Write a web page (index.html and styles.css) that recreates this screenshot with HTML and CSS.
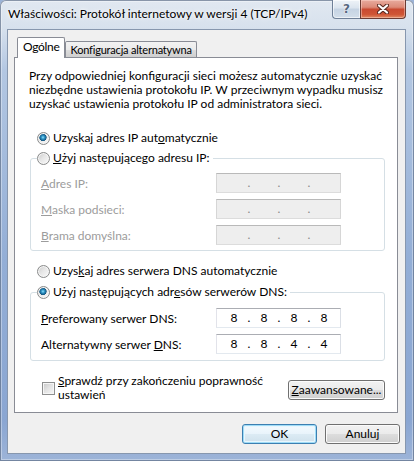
FILE: index.html
```html
<!DOCTYPE html>
<html lang="pl">
<head>
<meta charset="utf-8">
<title>Właściwości: Protokół internetowy w wersji 4 (TCP/IPv4)</title>
<link rel="stylesheet" href="styles.css">
</head>
<body>
<div class="window">
  <div class="titlebar">
    <div class="title">Właściwości: Protokół internetowy w wersji 4 (TCP/IPv4)</div>
    <div class="caption">
      <div class="cbtn help"><span>?</span></div>
      <div class="cbtn close">
        <svg width="12" height="10" viewBox="0 0 12 10">
          <path class="x-outline" d="M2 1.5 L10 8.5 M10 1.5 L2 8.5"/>
          <path class="x-fill" d="M2 1.5 L10 8.5 M10 1.5 L2 8.5"/>
        </svg>
      </div>
    </div>
  </div>
  <div class="client">
    <div class="tabs">
      <div class="tab active">Ogólne</div>
      <div class="tab">Konfiguracja alternatywna</div>
    </div>
    <div class="panel">
      <p class="desc">Przy odpowiedniej konfiguracji sieci możesz automatycznie uzyskać<br>niezbędne ustawienia protokołu IP. W przeciwnym wypadku musisz<br>uzyskać ustawienia protokołu IP od administratora sieci.</p>

      <div class="option first"><span class="radio checked"></span><span>Uzyskaj adres IP aut<u>o</u>matycznie</span></div>

      <fieldset class="group group-ip">
        <legend><span class="legend-option"><span class="radio"></span><span><u>U</u>żyj następującego adresu IP:</span></span></legend>
        <div class="field disabled"><span class="label"><u>A</u>dres IP:</span><span class="ipbox off"><span class="oct"></span><span class="dot">.</span><span class="oct"></span><span class="dot">.</span><span class="oct"></span><span class="dot">.</span><span class="oct"></span></span></div>
        <div class="field disabled"><span class="label"><u>M</u>aska podsieci:</span><span class="ipbox off"><span class="oct"></span><span class="dot">.</span><span class="oct"></span><span class="dot">.</span><span class="oct"></span><span class="dot">.</span><span class="oct"></span></span></div>
        <div class="field disabled"><span class="label"><u>B</u>rama domyślna:</span><span class="ipbox off"><span class="oct"></span><span class="dot">.</span><span class="oct"></span><span class="dot">.</span><span class="oct"></span><span class="dot">.</span><span class="oct"></span></span></div>
      </fieldset>

      <div class="option second"><span class="radio"></span><span>Uzys<u>k</u>aj adres serwera DNS automatycznie</span></div>

      <fieldset class="group group-dns">
        <legend><span class="legend-option"><span class="radio checked"></span><span>Użyj następujących adr<u>e</u>sów serwerów DNS:</span></span></legend>
        <div class="field"><span class="label"><u>P</u>referowany serwer DNS:</span><span class="ipbox"><span class="oct">8</span><span class="dot">.</span><span class="oct">8</span><span class="dot">.</span><span class="oct">8</span><span class="dot">.</span><span class="oct">8</span></span></div>
        <div class="field"><span class="label">Alternatywny serwer <u>D</u>NS:</span><span class="ipbox"><span class="oct">8</span><span class="dot">.</span><span class="oct">8</span><span class="dot">.</span><span class="oct">4</span><span class="dot">.</span><span class="oct">4</span></span></div>
      </fieldset>

      <div class="bottom-row">
        <div class="check"><span class="checkbox"></span><span class="check-text"><u>S</u>prawdź przy zakończeniu poprawność<br>ustawień</span></div>
        <div class="btn adv"><span><u>Z</u>aawansowane...</span></div>
      </div>
    </div>
    <div class="footer">
      <div class="btn default">OK</div>
      <div class="btn">Anuluj</div>
    </div>
  </div>
</div>
</body>
</html>
```

FILE: styles.css
```css
* { box-sizing: border-box; }
html, body { margin: 0; padding: 0; }
body {
  width: 414px;
  height: 461px;
  overflow: hidden;
  background: #9bb3d8;
  font-family: Lato, "Open Sans", sans-serif;
  font-size: 12px;
  color: #000;
}
u { text-decoration: underline; text-underline-offset: 1px; }

.window {
  width: 414px;
  height: 461px;
  display: flex;
  flex-direction: column;
  padding: 0 8px 7px 7px;
  border-radius: 6px 6px 0 0;
  background:
    linear-gradient(180deg, #e1e8f1 0, #d7e1ed 28px, #b3c7e2 70px, #93aed6 260px, #8aa6d2 420px, #9db4d8 461px);
  box-shadow: inset 0 0 0 1px rgba(55, 75, 105, .55), inset 0 0 0 2px rgba(255, 255, 255, .35);
}

.titlebar {
  flex: none;
  height: 29px;
  display: flex;
  align-items: flex-start;
}
.title {
  flex: 1;
  padding: 7px 0 0 1px;
  line-height: 14px;
  white-space: nowrap;
  text-shadow: 0 0 6px #fff, 0 0 3px #fff;
}
.caption { display: flex; }
.cbtn {
  height: 19px;
  display: flex;
  align-items: center;
  justify-content: center;
}
.help {
  width: 28px;
  border: 1px solid #6f8098;
  border-top: none;
  border-right: none;
  border-radius: 0 0 0 4px;
  background: linear-gradient(180deg, #eef3f8 0, #dbe4ee 45%, #c5d3e3 50%, #d3deea 100%);
  box-shadow: inset 0 0 0 1px rgba(255,255,255,.6);
}
.help span {
  font-family: "DejaVu Sans", sans-serif;
  font-size: 12px;
  font-weight: bold;
  color: #56677f;
  line-height: 12px;
  text-shadow: 0 0 2px #fff, 0 0 1px #fff;
}
.close {
  width: 46px;
  border: 1px solid #6b3b33;
  border-top: none;
  border-radius: 0 0 4px 0;
  background: linear-gradient(180deg, #e8ab9e 0, #dc8a78 40%, #c94a31 52%, #cf5535 80%, #e08a62 100%);
  box-shadow: inset 0 0 0 1px rgba(255,220,210,.45);
}
.x-outline { stroke: #5b2a22; stroke-width: 4.2; stroke-linecap: round; fill: none; }
.x-fill { stroke: #fff; stroke-width: 2.2; stroke-linecap: round; fill: none; }

.client {
  flex: 1;
  display: flex;
  flex-direction: column;
  background: #f0f0f0;
  border: 1px solid #8797ae;
  padding: 7px 7px 0 6px;
}

.tabs {
  flex: none;
  height: 20px;
  display: flex;
  align-items: flex-end;
  margin-left: 3px;
}
.tab {
  height: 16px;
  padding: 0 4px;
  line-height: 15px;
  font-size: 11px;
  letter-spacing: -0.2px;
  border: 1px solid #898c95;
  border-bottom: none;
  border-radius: 2px 2px 0 0;
  background: linear-gradient(180deg, #f2f2f2 0, #ebebeb 50%, #dddddd 51%, #cfcfcf 100%);
  white-space: nowrap;
}
.tab.active {
  position: relative;
  z-index: 1;
  height: 21px;
  margin-bottom: -1px;
  padding: 0 5px;
  line-height: 18px;
  font-size: 12px;
  letter-spacing: -0.3px;
  background: #fff;
}

.panel {
  flex: none;
  height: 356px;
  display: flex;
  flex-direction: column;
  background: #fff;
  border: 1px solid #898c95;
  padding: 11px 0 0 14px;
}
.desc {
  margin: 0;
  line-height: 14px;
  white-space: nowrap;
}

.option, .legend-option {
  display: flex;
  align-items: center;
  gap: 3px;
  height: 14px;
  line-height: 14px;
  white-space: nowrap;
}
.option { margin-left: 8px; }
.option.first { margin-top: 20px; }
.option.second { margin-top: 13px; }

.radio {
  flex: none;
  width: 13px;
  height: 13px;
  border-radius: 50%;
  border: 1px solid #8a8b8b;
  background: linear-gradient(135deg, #c9c9c9 0, #e6e6e6 45%, #fbfbfb 100%);
  box-shadow: inset 0 0 0 1px #f6f6f6;
}
.radio.checked {
  background:
    radial-gradient(circle at 45% 40%, #8ee0f8 0, #2f95c8 1.6px, #11557f 3.4px, rgba(17,85,127,0) 3.9px),
    linear-gradient(135deg, #c9c9c9 0, #e6e6e6 45%, #fbfbfb 100%);
}

.group {
  margin: 0 12px 0 1px;
  padding: 8px 0 5px 6px;
  border: 1px solid #d5dfe5;
  border-radius: 3px;
  min-width: 0;
}
.group-ip { margin-top: 6px; }
.group-dns { margin-top: 7px; padding-top: 9px; padding-bottom: 6px; }
.group legend {
  padding: 0 3px 0 0;
  margin: 0;
}

.field {
  display: flex;
  align-items: center;
  height: 20px;
  padding-left: 4px;
}
.field + .field { margin-top: 6px; }
.label { width: 175px; flex: none; white-space: nowrap; }
.field.disabled .label { color: #9c9c9c; }

.ipbox {
  flex: none;
  width: 125px;
  height: 20px;
  display: flex;
  align-items: center;
  padding-left: 4px;
  border: 1px solid;
  border-color: #abadb3 #dbdfe6 #e3e9ef #e2e3ea;
  background: #fff;
  line-height: 14px;
}
.ipbox.off {
  background: #eeeeee;
  border-color: #b9b9b9 #d6d6d6 #dcdcdc #d6d6d6;
}
.oct { width: 26px; text-align: center; }
.dot { width: 4px; text-align: center; }
.ipbox.off .dot { color: #8a8a8a; }

.bottom-row {
  display: flex;
  align-items: flex-start;
  margin-top: 13px;
}
.check {
  display: flex;
  align-items: center;
  gap: 3px;
  margin-left: 13px;
}
.checkbox {
  flex: none;
  width: 13px;
  height: 13px;
  border: 1px solid #8e8f8f;
  background: linear-gradient(135deg, #c8c8c8 0, #e4e4e4 50%, #f8f8f8 100%);
  box-shadow: inset 0 0 0 1px #f6f6f6;
}
.check-text { line-height: 14px; white-space: nowrap; }

.btn {
  width: 75px;
  height: 20px;
  display: flex;
  align-items: center;
  justify-content: center;
  border: 1px solid #707070;
  border-radius: 3px;
  background: linear-gradient(180deg, #f2f2f2 0, #ebebeb 48%, #dddddd 52%, #cfcfcf 100%);
  box-shadow: inset 0 0 0 1px #fbfbfb;
  white-space: nowrap;
  line-height: 14px;
}
.btn.adv {
  width: 97px;
  margin: 6px 12px 0 auto;
}
.btn.default {
  border-color: #3c7fb1;
  background: linear-gradient(180deg, #f4fafe 0, #e9f4fb 48%, #dcebf4 52%, #cfe1ec 100%);
  box-shadow: inset 0 0 0 1px #9fdcf7, inset 0 0 0 2px #e8f6fd;
}
.footer {
  flex: none;
  display: flex;
  justify-content: flex-end;
  gap: 8px;
  margin-top: 11px;
  margin-right: -2px;
}
```
